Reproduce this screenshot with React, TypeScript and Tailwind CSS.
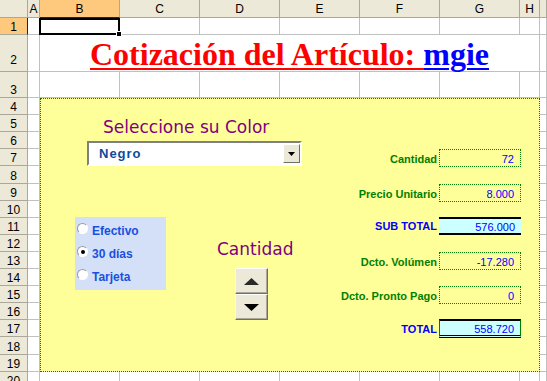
const COLS = ['A', 'B', 'C', 'D', 'E', 'F', 'G', 'H'];
const MID = ['B', 'C', 'D', 'E', 'F', 'G', 'H'];
const FREE_ROWS = [5, 6, 7, 8, 9, 10, 11, 12, 13, 14, 15, 16, 17, 18, 19];

const LINES = [
  { row: 'row-start-4', label: 'Cantidad', value: '72', kind: 'dot' },
  { row: 'row-start-6', label: 'Precio Unitario', value: '8.000', kind: 'dot' },
  { row: 'row-start-8', label: 'SUB TOTAL', value: '576.000', kind: 'sub' },
  { row: 'row-start-10', label: 'Dcto. Volúmen', value: '-17.280', kind: 'dot' },
  { row: 'row-start-12', label: 'Dcto. Pronto Pago', value: '0', kind: 'dot' },
  { row: 'row-start-14', label: 'TOTAL', value: '558.720', kind: 'total' },
];

function Cell({ className = '' }: { className?: string }) {
  return <div className={`border-r border-b border-[#c0c0c0] bg-white ${className}`} />;
}

function ColHead({ label, active }: { label: string; active?: boolean }) {
  return (
    <div
      className={`flex items-center justify-center border-r border-b border-[#aca899] text-[12px] leading-none ${
        active ? 'bg-[#ffc97d] border-b-[#0a246a]' : 'bg-[#ece9d8]'
      }`}
    >
      {label}
    </div>
  );
}

function RowHead({ n, active, tall }: { n: number; active?: boolean; tall?: boolean }) {
  return (
    <div
      className={`flex items-end justify-center border-r border-b border-[#aca899] text-[12px] leading-[12px] ${
        tall ? 'pb-[5px]' : 'pb-px'
      } ${active ? 'bg-[#ffc97d] border-r-[#0a246a]' : 'bg-[#ece9d8]'}`}
    >
      {n}
    </div>
  );
}

function Radio({ label, checked }: { label: string; checked?: boolean }) {
  return (
    <div className="h-[23px] flex items-center pl-[2px] gap-[4px]">
      <span className="mb-[4px] w-[11px] h-[11px] rounded-full bg-white border border-t-[#9a9a9a] border-l-[#9a9a9a] border-b-white border-r-white flex items-center justify-center">
        {checked && <span className="w-[4px] h-[4px] rounded-full bg-black" />}
      </span>
      <span className="text-[12px] leading-[12px] font-bold text-[#1850e0]">{label}</span>
    </div>
  );
}

function SpinButton({ down }: { down?: boolean }) {
  return (
    <div className="h-[26px] flex items-center justify-center bg-[#ece9d8] border border-t-white border-l-white border-r-[#716f64] border-b-[#716f64] shadow-[inset_-1px_-1px_0_#aca899]">
      <svg width="15" height="7" viewBox="0 0 15 7">
        {down ? (
          <polygon points="0,0 15,0 7.5,7" fill="#000" />
        ) : (
          <polygon points="0,7 15,7 7.5,0" fill="#2a2a2a" />
        )}
      </svg>
    </div>
  );
}

function Panel() {
  return (
    <div className="col-span-7 row-span-16 bg-[#ffff99] outline-1 outline-dotted outline-[#008000] -outline-offset-1 grid grid-cols-[80px_80px_80px_80px_80px_80px_20px] grid-rows-[17px_17px_17px_17px_18px_17px_17px_17px_17px_17px_17px_17px_17px_17px_18px_17px]">
      {/* color picker */}
      <div className="col-start-1 col-span-5 row-start-2 row-span-2 pl-[63px] pt-[4px] font-['DejaVu_Sans',sans-serif] text-[17px] leading-[17px] text-[#800080] whitespace-pre">
        Seleccione su Color
      </div>
      <div className="col-start-1 col-span-4 row-start-3 row-span-2 flex items-end">
        <div className="ml-[47px] w-[215px] h-[25px] bg-white border-2 border-t-[#808080] border-l-[#808080] border-b-white border-r-white flex items-stretch">
          <div className="flex-1 flex items-center pl-[10px] text-[13px] leading-[13px] font-bold tracking-[1px] text-[#0c4a9c]">
            Negro
          </div>
          <div className="my-px w-[17px] flex items-center justify-center bg-[#ece9d8] border border-t-white border-l-white border-r-[#716f64] border-b-[#716f64]">
            <svg width="7" height="4" viewBox="0 0 7 4">
              <polygon points="0,0 7,0 3.5,4" fill="#000" />
            </svg>
          </div>
        </div>
      </div>

      {/* forma de pago */}
      <div className="col-start-1 col-span-2 row-start-8 row-span-5 -mt-px ml-[35px] w-[91px] h-[73px] bg-[#d4e0f8] pt-[2px] flex flex-col">
        <Radio label="Efectivo" />
        <Radio label="30 días" checked />
        <Radio label="Tarjeta" />
      </div>

      {/* cantidad spinner */}
      <div className="col-start-3 col-span-2 row-start-9 row-span-2 pl-[17px] pt-[6px] font-['DejaVu_Sans',sans-serif] text-[17px] leading-[17px] text-[#800080]">
        Cantidad
      </div>
      <div className="col-start-3 row-start-11 row-span-3 -mt-px ml-[35px] w-[33px] flex flex-col">
        <SpinButton />
        <SpinButton down />
      </div>

      {/* totals */}
      {LINES.map((l) => (
        <div key={l.label} className={`${l.row} col-start-4 col-span-2 flex items-end justify-end pr-[3px] text-[11px] leading-[11px] font-bold ${
          l.kind === 'sub' ? 'pb-[3px] text-[#0000ff]' : l.kind === 'total' ? 'pb-[2px] text-[#0000ff]' : 'pb-px text-[#008000]'
        }`}>
          {l.label}
        </div>
      ))}
      {LINES.map((l) => (
        <div key={l.value} className={`${l.row} col-start-6`}>
          <div
            className={`-ml-px w-[82px] flex items-end justify-end pr-[6px] text-[11px] leading-[11px] text-[#0000ff] ${
              l.kind === 'sub'
                ? '-mt-px h-[18px] bg-[#ccffff] border-y-2 border-black'
                : l.kind === 'total'
                ? '-mt-px h-[19px] bg-[#ccffff] border-t-2 border-b-[3px] border-b-black border-t-black border-double border-x border-x-[#008000] border-x-dotted'
                : 'h-[18px] pb-px border border-dotted border-[#008000]'
            }`}
          >
            {l.value}
          </div>
        </div>
      ))}
    </div>
  );
}

export default function App() {
  return (
    <div className="w-[547px] h-[381px] overflow-hidden bg-white font-['Liberation_Sans',Arial,sans-serif] text-black">
      <div className="grid grid-cols-[28px_12px_80px_80px_80px_80px_80px_80px_20px_1fr] grid-rows-[18px_17px_37px_26px_17px_17px_17px_17px_18px_17px_17px_17px_17px_17px_17px_17px_17px_17px_18px_17px_17px]">
        {/* column headers */}
        <div className="bg-[#ece9d8] border-r border-b border-[#aca899]" />
        {COLS.map((c) => (
          <ColHead key={c} label={c} active={c === 'B'} />
        ))}
        <ColHead label="" />

        {/* row 1 */}
        <RowHead n={1} active />
        <Cell />
        <div className="relative border-r border-b border-[#c0c0c0] bg-white">
          <div className="absolute top-0 left-[-1px] right-[-1px] bottom-[-1px] border-2 border-black z-10" />
          <div className="absolute right-[-3px] bottom-[-3px] w-[6px] h-[6px] bg-black border border-white z-20" />
        </div>
        {MID.slice(1).map((c) => (
          <Cell key={c} />
        ))}
        <Cell />

        {/* row 2: title */}
        <RowHead n={2} tall />
        <Cell />
        <div className="col-span-7 border-r border-b border-[#c0c0c0] flex items-end justify-center pb-px">
          <span className="font-['Liberation_Serif',serif] font-bold text-[32px] leading-none whitespace-pre">
            <span className="text-[#ff0000] underline decoration-2 underline-offset-[3px] decoration-[#ff0000]">Cotización del Artículo: </span>
            <span className="text-[#0000ff] underline decoration-2 underline-offset-[3px] decoration-[#0000ff]">mgie</span>
          </span>
        </div>
        <Cell />

        {/* row 3 */}
        <RowHead n={3} />
        <Cell />
        {MID.map((c) => (
          <Cell key={c} />
        ))}
        <Cell />

        {/* rows 4-19 */}
        <RowHead n={4} />
        <Cell />
        <Panel />
        <Cell />
        {FREE_ROWS.map((r) => [
          <RowHead key={`h${r}`} n={r} />,
          <Cell key={`a${r}`} />,
          <Cell key={`i${r}`} />,
        ])}

        {/* row 20 */}
        <RowHead n={20} />
        <Cell />
        {MID.map((c) => (
          <Cell key={c} />
        ))}
        <Cell />
      </div>
    </div>
  );
}
